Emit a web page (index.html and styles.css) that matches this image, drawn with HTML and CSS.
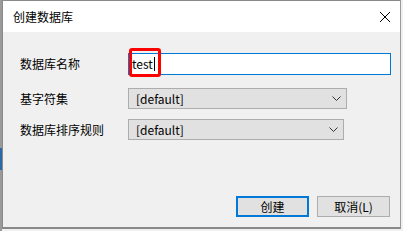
FILE: index.html
```html
<!DOCTYPE html>
<html lang="zh-CN">
<head>
    <meta charset="UTF-8">
    <title>创建数据库</title>
    <link rel="stylesheet" href="styles.css">
</head>
<body>

<div class="backdrop"><div class="backdrop-accent"></div></div>

<div class="dialog">
    <header class="titlebar">
        <span class="title">创建数据库</span>
        <svg class="close" width="12" height="12" viewBox="0 0 12 12">
            <path d="M1 1 L11 11 M11 1 L1 11" stroke="#000" stroke-width="1" fill="none"/>
        </svg>
    </header>

    <main class="form">
        <div class="row row-name">
            <label>数据库名称</label>
            <div class="field">
                <div class="input">test<span class="caret"></span></div>
                <div class="highlight"></div>
            </div>
        </div>
        <div class="row row-charset">
            <label>基字符集</label>
            <div class="select select-wide">
                <span>[default]</span>
                <svg class="chevron" width="9" height="5" viewBox="0 0 9 5">
                    <path d="M0.5 0.5 L4.5 4.5 L8.5 0.5" stroke="#333" stroke-width="1" fill="none"/>
                </svg>
            </div>
        </div>
        <div class="row row-collation">
            <label>数据库排序规则</label>
            <div class="select select-narrow">
                <span>[default]</span>
                <svg class="chevron" width="9" height="5" viewBox="0 0 9 5">
                    <path d="M0.5 0.5 L4.5 4.5 L8.5 0.5" stroke="#333" stroke-width="1" fill="none"/>
                </svg>
            </div>
        </div>
    </main>

    <footer class="buttons">
        <button class="btn btn-default">创建</button>
        <button class="btn">取消(L)</button>
    </footer>
</div>

</body>
</html>
```

FILE: styles.css
```css
/* 对话框 */
body {
    margin: 0;
    padding: 0;
    width: 403px;
    height: 231px;
    background-color: #f0f0f0;
    font-family: "Noto Sans CJK SC", sans-serif;
    font-size: 12px;
    color: #000;
    display: flex;
    overflow: hidden;
}
.backdrop {
    width: 2px;
    background-color: #9a9a9a;
}
.backdrop-accent {
    margin-top: 148px;
    height: 22px;
    background-color: #2b6aa6;
}
.dialog {
    width: 397px;
    height: 226px;
    border: 1px solid #8a8a8a;
    border-right-color: #9a9a9a;
    border-bottom: 2px solid #888;
    background-color: #f0f0f0;
    display: flex;
    flex-direction: column;
}
.titlebar {
    height: 31px;
    background-color: #fff;
    display: flex;
    align-items: center;
    justify-content: space-between;
    padding: 0 9px 0 10px;
}
.title {
    line-height: 16px;
}
.close {
    margin-top: 1px;
}
.form {
    padding: 21px 0 0 17px;
}
.row {
    display: flex;
    align-items: center;
    height: 22px;
}
.row label {
    width: 108px;
    line-height: 16px;
}
.row-charset {
    margin-top: 13px;
    height: 21px;
}
.row-collation {
    margin-top: 10px;
    height: 21px;
}
.field {
    position: relative;
}
.input {
    width: 258px;
    height: 20px;
    border: 1px solid #0078d7;
    background-color: #fff;
    padding-left: 3px;
    line-height: 20px;
    display: flex;
    align-items: center;
}
.caret {
    display: inline-block;
    width: 1px;
    height: 14px;
    margin-left: 1px;
    background-color: #000;
}
.highlight {
    position: absolute;
    left: 1px;
    top: -5px;
    width: 26px;
    height: 23px;
    border: 3px solid #f00;
    border-radius: 3px;
}
.select {
    height: 19px;
    border: 1px solid #adadad;
    background-color: #e1e1e1;
    display: flex;
    align-items: center;
    justify-content: space-between;
    padding: 0 5px 0 7px;
    line-height: 19px;
}
.select-wide {
    width: 205px;
}
.select-narrow {
    width: 202px;
}
.buttons {
    margin-top: auto;
    display: flex;
    justify-content: flex-end;
    gap: 8px;
    padding: 0 10px 10px 0;
}
.btn {
    width: 73px;
    height: 21px;
    border: 1px solid #adadad;
    background-color: #e1e1e1;
    font-family: "Noto Sans CJK SC", sans-serif;
    font-size: 12px;
    line-height: 17px;
    padding: 0;
    color: #000;
}
.btn-default {
    border: 2px solid #0078d7;
}
```
